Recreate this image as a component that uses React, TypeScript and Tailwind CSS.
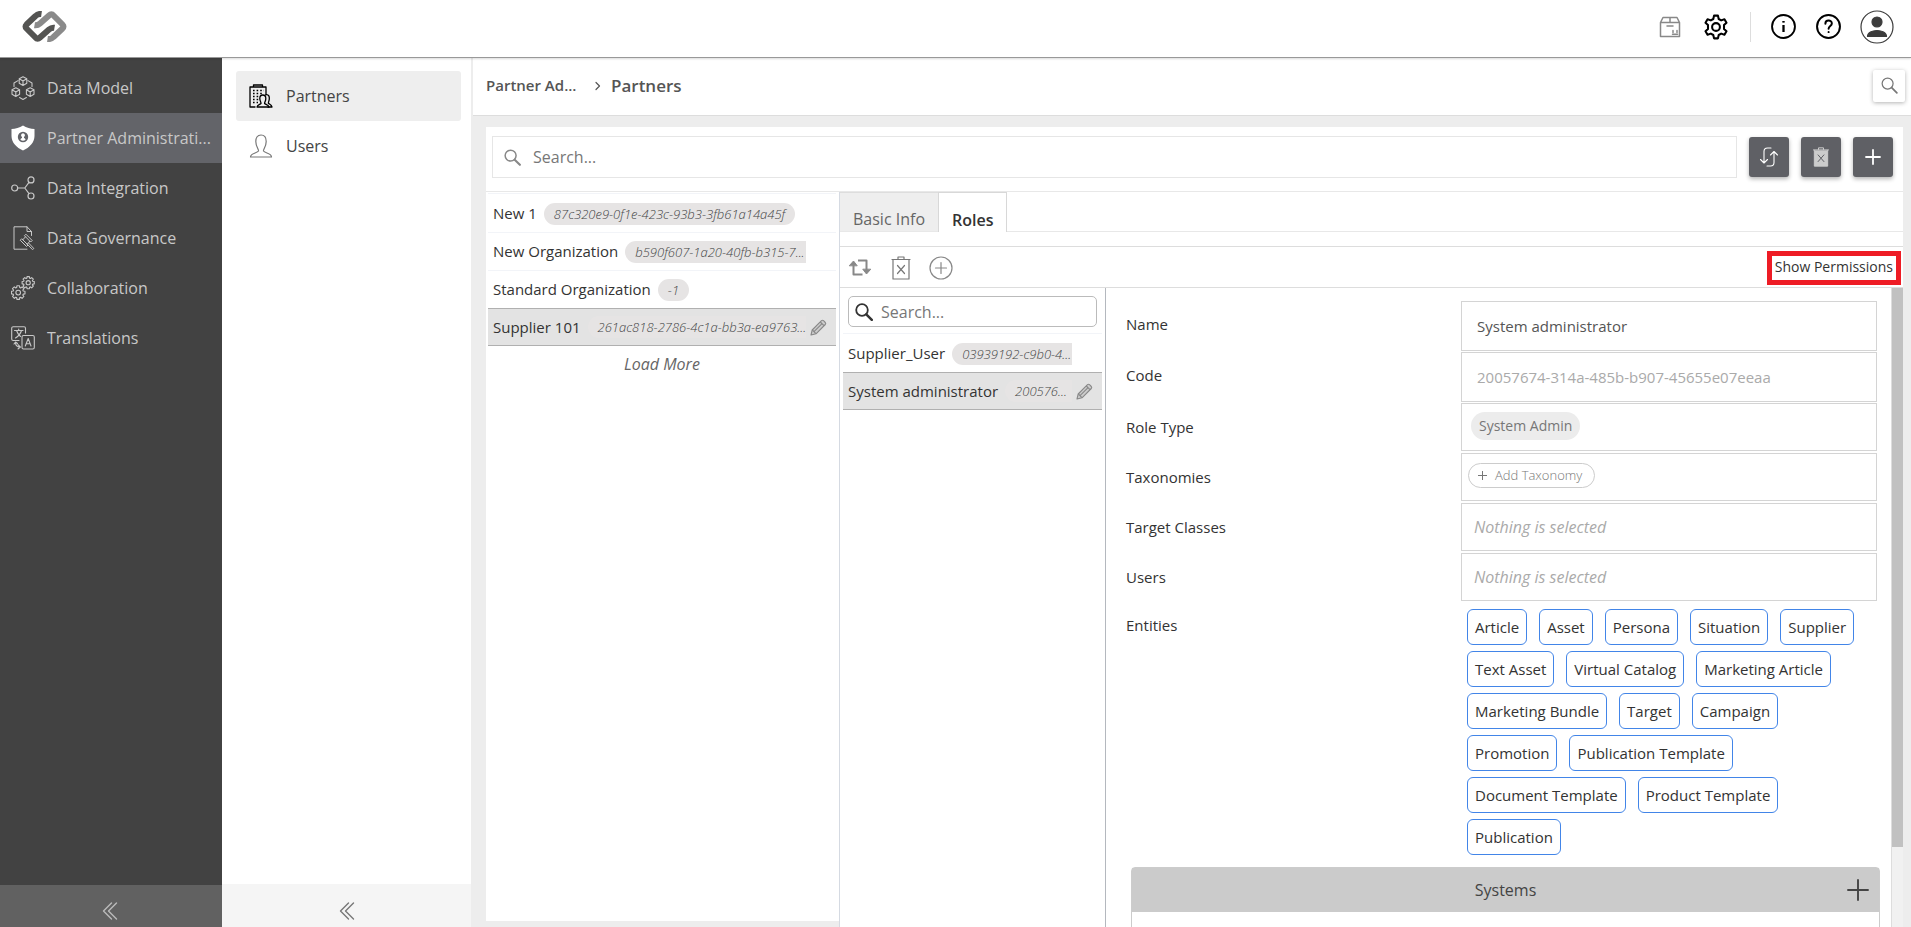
import type { ReactNode } from "react";

function Svg({ s = 24, w = 1, c = "", children, vb = 24 }: { s?: number; w?: number; c?: string; children: ReactNode; vb?: number }) {
  return (
    <svg width={s} height={s} viewBox={`0 0 ${vb} ${vb}`} fill="none" stroke="currentColor" strokeWidth={w} strokeLinecap="round" strokeLinejoin="round" className={`shrink-0 ${c}`} aria-hidden="true">
      {children}
    </svg>
  );
}

const cube = (x: number, y: number) => (
  <path d={`M${x} ${y - 4.2}l3.8 2v4.4l-3.8 2.2l-3.8 -2.2v-4.4zM${x - 3.8} ${y - 2.2}l3.8 2.1l3.8 -2.1M${x} ${y - 0.1}v4.3`} />
);

function Gear({ x, y, r }: { x: number; y: number; r: number }) {
  const pts: string[] = [];
  for (let i = 0; i < 8; i++) {
    const a = (i * Math.PI) / 4;
    const at = (k: number, off: number) => `${(x + Math.cos(a + off) * k).toFixed(2)} ${(y + Math.sin(a + off) * k).toFixed(2)}`;
    pts.push(at(r * 0.76, -0.3), at(r, -0.19), at(r, 0.19), at(r * 0.76, 0.3));
  }
  return (
    <>
      <path d={`M${pts.join("L")}Z`} />
      <circle cx={x} cy={y} r={r * 0.34} />
    </>
  );
}

function DataModelIcon() {
  return (
    <Svg w={1.1}>
      {cube(12, 5)}
      {cube(4.8, 16)}
      {cube(19.2, 16)}
      <path d="M7 4.6L3 7v3.4M17 4.6L21 7v3.4M8.600 21.500L12 23.400l3.400-1.900" />
    </Svg>
  );
}

function ShieldIcon() {
  return (
    <Svg s={26} vb={26}>
      <path d="M13 .5C9.500 2.700 5.500 3.700 1.500 4v7c0 6.500 5 11.500 11.500 14.500C19.500 22.500 24.500 17.500 24.500 11V4C20.500 3.700 16.500 2.700 13 .5z" fill="#fff" stroke="none" />
      <circle cx="13" cy="12" r="5.200" fill="#636469" stroke="none" />
      <path d="M13 8.200a2 2 0 0 1 1 3.700v1.200c.8.300 1.400.800 1.600 1.600a4 4 0 0 1-5.200 0c.2-.8.800-1.300 1.600-1.600v-1.200a2 2 0 0 1 1-3.700z" fill="#fff" stroke="none" />
    </Svg>
  );
}

function IntegrationIcon() {
  return (
    <Svg w={1.2}>
      <circle cx="3.700" cy="12" r="3" />
      <circle cx="20" cy="3.900" r="3" />
      <circle cx="20" cy="20" r="3" />
      <path d="M6.800 12h7M18 6.300L13.800 12L18 17.600" />
    </Svg>
  );
}

function GovernanceIcon() {
  return (
    <Svg>
      <path d="M20.500 9.500V5.500L16 .8H3v22.400h13M16 .8v4.700h4.500" />
      <path d="M15.200 8.500l6 6l-1.500 1.500l-6-6zM11 13l6 6l-1.500 1.500l-6-6zM14.500 10.800L11.800 13.800M18.900 15.200L16.200 18.200M17.800 17.200l5 5.300l-1.300 1.200l-5-5.300" />
    </Svg>
  );
}

function CollabIcon() {
  return (
    <Svg w={1.1}>
      <Gear x={17.2} y={6.7} r={6.2} />
      <Gear x={7.2} y={16.6} r={6.9} />
    </Svg>
  );
}

function TranslateIcon() {
  return (
    <Svg w={1.1}>
      <path d="M8 14.500H2.200a1.500 1.500 0 0 1-1.500-1.500V2.200A1.500 1.500 0 0 1 2.200.7H13a1.500 1.500 0 0 1 1.500 1.500V7" />
      <rect x="11" y="9.500" width="12.300" height="13.500" rx="1.500" />
      <path d="M3.500 4.500h8.500M7.700 3v1.500M10.500 4.500C9.500 8 7 10.500 4.500 12M5.500 4.500C6.500 7.500 8 9.200 9.500 10.500M14.300 20l2.900-7.500L20 20M15.300 17.700h3.700" />
      <path d="M4.500 16.500c0 3 2 4.500 5 4.500M3 18l1.500-2l2 1.500M7 18.700L9.300 21L7 23" />
    </Svg>
  );
}

function PartnersIcon() {
  return (
    <Svg w={1.3}>
      <path d="M6 23H1V3h16v8M4.500 3V1h9v2" />
      <path d="M4 6.500h11M4 9.500h10M4 12.500h7M4 15.500h6M4 18.500h5" strokeDasharray="1.600 2" strokeLinecap="butt" />
      <path d="M17 10.700c3-.4 3.500 2 3.300 4.300c-.2 2-1 3-.9 4.200c1 1 3 1.300 3.600 3.800h-4" fill="#eee" />
      <path d="M8 23c.3-2.300 3-2.500 4-3.500c.4-1-1.200-2-1.200-5c0-2 1-3.500 3-3.500s3 1.500 3 3.500c0 3-1.500 4-1.200 5c1 1 4 1.200 4.400 3.500z" fill="#eee" />
    </Svg>
  );
}

function UserIcon() {
  return (
    <Svg w={1.2}>
      <path d="M1.500 23c0-4 6.500-3.700 8-6c.5-1.500-2.700-4-2.700-9.500C6.800 3.500 8.500 1 12 1s5.200 2.500 5.200 6.500c0 5.500-3.200 8-2.700 9.500c1.500 2.300 8 2 8 6z" />
    </Svg>
  );
}

function SearchIcon({ s = 18, w = 1.6 }: { s?: number; w?: number }) {
  return (
    <Svg s={s} w={w} vb={18}>
      <circle cx="7" cy="7" r="5.800" />
      <path d="M11.300 11.300L16.800 16.800" strokeWidth={w * 1.4} />
    </Svg>
  );
}

function PencilIcon() {
  return (
    <svg width="17" height="17" viewBox="0 0 17 17" className="shrink-0" aria-hidden="true">
      <path d="M1 16l1.200-5L11.500 1.700a1.500 1.500 0 0 1 2 0l1.800 1.800a1.500 1.500 0 0 1 0 2L6 14.800z" fill="#ccc" stroke="#888" strokeWidth="1.100" strokeLinejoin="round" />
      <path d="M4 12.700L12.300 4.400M2.400 11l3.500 3.600M10.300 3l3.700 3.700" stroke="#888" strokeWidth="1.100" />
    </svg>
  );
}

function TrashIcon({ s = 24, solid = false }: { s?: number; solid?: boolean }) {
  return (
    <Svg s={s} w={1.2}>
      <path d="M4 4v19h16V4" fill={solid ? "#ccc" : "none"} />
      <path d="M3 3.500h18M9 3V1h6v2" />
      <path d="M8.500 9.500l7 8M15.500 9.500l-7 8" stroke={solid ? "#5f6065" : "currentColor"} />
    </Svg>
  );
}

function Chevrons() {
  return (
    <Svg s={18} w={1.4} vb={18}>
      <path d="M9.500 1L1.500 9L9.500 17M14.500 1L6.500 9L14.500 17" />
    </Svg>
  );
}

const nav: [string, ReactNode][] = [
  ["Data Model", <DataModelIcon />],
  ["Partner Administrati...", <ShieldIcon />],
  ["Data Integration", <IntegrationIcon />],
  ["Data Governance", <GovernanceIcon />],
  ["Collaboration", <CollabIcon />],
  ["Translations", <TranslateIcon />],
];

const entities = ["Article", "Asset", "Persona", "Situation", "Supplier", "Text Asset", "Virtual Catalog", "Marketing Article", "Marketing Bundle", "Target", "Campaign", "Promotion", "Publication Template", "Document Template", "Product Template", "Publication"];

function ListRow({ name, code, selected = false, fit = false }: { name: string; code: string; selected?: boolean; fit?: boolean }) {
  return (
    <li className={selected ? "-mt-px border-y border-[#b0b0b0] bg-[#e3e3e3]" : "border-b border-[#f2f4f8]"}>
      <button type="button" className={`flex w-full items-center pr-[9px] pl-[5px] text-left ${selected ? "h-9" : "h-[37px]"}`}>
        <span className="shrink-0 text-[15px] text-[#333]">{name}</span>
        <span className={`ml-[7px] h-[22px] bg-[#e6e4e4] pl-2.5 text-[13px] leading-[22px] font-light whitespace-nowrap text-[#444] italic ${fit ? "rounded-full pr-2.5" : "min-w-0 flex-1 rounded-l-full"}`}>{code}</span>
        {!fit && <span className="ml-1 w-[17px] shrink-0">{selected && <PencilIcon />}</span>}
      </button>
    </li>
  );
}

function Field({ label, tall = false, children }: { label: string; tall?: boolean; children: ReactNode }) {
  return (
    <div className={`flex ${tall ? "mb-px h-[50px]" : "mb-0.5 h-12"}`}>
      <label htmlFor={label} className={`flex w-[335px] shrink-0 items-center text-[15px] text-[#333] ${tall ? "pb-1" : ""}`}>{label}</label>
      <div className="flex min-w-0 flex-1 items-center border border-[#d4d4d4]">{children}</div>
    </div>
  );
}

const darkButton = "flex size-10 items-center justify-center rounded-[3px] bg-[#5f6065] text-white shadow-[0_2px_4px_rgba(0,0,0,0.3)]";

export default function App() {
  return (
    <div className="flex h-screen flex-col overflow-hidden bg-white font-['Open_Sans',sans-serif] text-[#333]">
      <header className="z-10 flex h-[58px] shrink-0 items-center justify-between border-b border-[#999] bg-white pr-[17px] pl-[22px] shadow-[0_1px_2px_rgba(0,0,0,0.15)]">
        <a href="#home" aria-label="Home" className="pb-1">
          <svg width="45" height="31" viewBox="0 0 45 31" fill="none" strokeWidth="6" strokeLinejoin="round" aria-hidden="true">
            <path d="M19.500 3Q16 2.500 13.500 5L4.500 13.500Q2.500 15.500 4.500 17.500L13.500 26.500Q15.500 28.800 18 26.500L27 18.500Q29.500 16.300 32.500 16.800" stroke="#545452" />
            <path d="M12.500 14.200Q15.500 14.700 18 12.500L27 4.500Q29.500 2.200 31.500 4.500L40.500 13.500Q42.500 15.500 40.500 17.500L31.500 26Q29 28.500 25.500 28" stroke="#8a8a8a" />
          </svg>
        </a>
        <div className="flex items-center pb-1">
          <button type="button" aria-label="Packages" className="text-[#888]">
            <Svg s={22} w={1.5} vb={22}>
              <path d="M1.500 6.500L4 1.500h14l2.500 5v14h-19zM1.500 6.500h19M11 1.500v5M8 10h6M14 14.500v2M18 14.500v2M13.500 18.300h5" />
            </Svg>
          </button>
          <button type="button" aria-label="Settings" className="ml-[22px] text-black">
            <Svg s={26} w={1.9}>
              <circle cx="12" cy="12" r="3.600" />
              <path d="M10.200 1.500h3.600l.7 3.100l2.300 1.300l3-1l1.900 3.200l-2.300 2.100v3.600l2.300 2.100l-1.900 3.200l-3-1l-2.300 1.300l-.7 3.100h-3.600l-.7-3.100l-2.300-1.300l-3 1l-1.900-3.200l2.300-2.100v-3.600l-2.300-2.100l1.900-3.200l3 1l2.300-1.300z" />
            </Svg>
          </button>
          <span className="mr-5 ml-[21px] h-[30px] w-px bg-[#ddd]" />
          <button type="button" aria-label="Information" className="text-black">
            <Svg s={25} w={1.8}>
              <circle cx="12" cy="12" r="11" />
              <path d="M12 10.500v6.700M12 7v.3" strokeWidth="2.200" strokeLinecap="butt" />
              <path d="M12 6.700v1.600" strokeWidth="2.200" strokeLinecap="butt" />
            </Svg>
          </button>
          <button type="button" aria-label="Help" className="ml-5 text-black">
            <Svg s={25} w={1.9}>
              <circle cx="12" cy="12" r="11" />
              <path d="M9 9.300c0-4 6.200-4 6.200-.2c0 2.300-3.100 2.500-3.100 5M12.100 17.200v.2" />
            </Svg>
          </button>
          <button type="button" aria-label="Account" className="ml-[19px] text-[#3c3c3c]">
            <Svg s={34} w={1.2} vb={34}>
              <circle cx="17" cy="17" r="16" />
              <circle cx="17" cy="12" r="5" fill="currentColor" />
              <path d="M7.500 26.500c0-8 19-8 19 0z" fill="currentColor" />
            </Svg>
          </button>
        </div>
      </header>

      <div className="flex min-h-0 flex-1">
        <nav aria-label="Main" className="flex w-[222px] shrink-0 flex-col bg-[#424242] pt-[5px]">
          {nav.map(([label, icon], i) => (
            <a key={label} href={`#nav-${i}`} className={`flex h-[50px] items-center pl-2.5 text-base whitespace-nowrap text-[#c8c8c8] ${i === 1 ? "bg-[#636469]" : ""}`}>
              <span className="flex w-[26px] shrink-0 justify-center">{icon}</span>
              <span className="ml-[11px]">{label}</span>
            </a>
          ))}
          <button type="button" aria-label="Collapse main menu" className="mt-auto flex h-[42px] items-center justify-center bg-[#616161] pt-2.5 text-[#bbb]"><Chevrons /></button>
        </nav>

        <nav aria-label="Partner Administration" className="flex w-[249px] shrink-0 flex-col pt-[13px]">
          <a href="#partners" className="mr-2.5 ml-3.5 flex h-[50px] items-center rounded-[3px] bg-[#eee] pl-[13px] text-black"><PartnersIcon /><span className="ml-[13px] text-[#444]">Partners</span></a>
          <a href="#users" className="mr-2.5 ml-3.5 flex h-[50px] items-center pl-[13px] text-[#777]"><UserIcon /><span className="ml-[13px] text-[#444]">Users</span></a>
          <button type="button" aria-label="Collapse submenu" className="mt-auto flex h-[43px] items-center justify-center bg-[#f5f5f5] pt-2.5 pl-0.5 text-[#777]"><Chevrons /></button>
        </nav>

        <main className="flex min-w-0 flex-1 flex-col bg-[#ededed]">
          <div className="ml-0.5 flex h-[58px] shrink-0 items-center border-b border-[#ddd] bg-white pr-1.5 pb-0.5 pl-[13px] font-semibold text-[#555]">
            <a href="#administration" className="w-[90px] text-[15px] whitespace-nowrap">Partner Ad...</a>
            <Svg s={10} w={1.2} vb={10} c="ml-[17px]"><path d="M3 1.500L6.500 5L3 8.500" /></Svg>
            <h1 className="ml-2 text-[17px]">Partners</h1>
            <button type="button" aria-label="Find" className="ml-auto flex size-8 items-center justify-center rounded-[2px] text-[#777] shadow-[0_1px_4px_rgba(0,0,0,0.3)]"><SearchIcon s={17} w={1.3} /></button>
          </div>

          <div className="mt-[11px] mr-2 ml-[15px] flex min-h-0 flex-1 flex-col">
            <div className="flex h-[65px] shrink-0 items-start border-b border-[#e8e8e8] bg-white pt-[9px] pr-2.5 pl-1.5">
              <label className="flex h-[42px] flex-1 items-center border border-[#e6e6e6] pl-[11px] text-[#888]">
                <SearchIcon s={17} />
                <input aria-label="Search partners" placeholder="Search..." className="ml-3 w-full text-base outline-none placeholder:text-[#777]" />
              </label>
              <div className="ml-3 flex gap-3 pt-px">
                <button type="button" aria-label="Refresh" className={darkButton}>
                  <Svg s={20} w={1.1} vb={20}><path d="M12 1H8.500Q5 1 5 4.500V16M1.500 12.500L5 16l3.500-3.500M8 19h3.500q3.500 0 3.500-3.500V4.500M11.500 8L15 4.500L18.500 8" /></Svg>
                </button>
                <button type="button" aria-label="Delete" className={darkButton}><span className="text-[#ccc]"><TrashIcon s={20} solid /></span></button>
                <button type="button" aria-label="Add" className={darkButton}><Svg s={16} w={1.8} vb={16}><path d="M8 1v14M1 8h14" /></Svg></button>
              </div>
            </div>

            <div className="flex min-h-0 flex-1">
              <section aria-label="Organizations" className="mb-1.5 w-[353px] shrink-0 bg-white pt-px pr-[3px] pl-0.5">
                <ul className="border-t border-[#f2f4f8] pt-px">
                  <ListRow name="New 1" code="87c320e9-0f1e-423c-93b3-3fb61a14a45f" fit />
                  <ListRow name="New Organization" code="b590f607-1a20-40fb-b315-7..." />
                  <ListRow name="Standard Organization" code="-1" fit />
                  <ListRow name="Supplier 101" code="261ac818-2786-4c1a-bb3a-ea9763..." selected />
                </ul>
                <button type="button" className="flex h-9 w-full items-center justify-center text-base text-[#666] italic">Load More</button>
              </section>

              <section aria-label="Partner details" className="flex min-w-0 flex-1 flex-col border-l border-[#d5dae2] bg-white">
                <div role="tablist" className="flex h-10 shrink-0 border-b border-[#e8e8e8] text-base">
                  <button role="tab" aria-selected="false" type="button" className="h-[39px] border-t border-[#ddd] bg-[#eee] px-[13px] pt-3.5 text-[#666]">Basic Info</button>
                  <button role="tab" aria-selected="true" type="button" className="h-10 border-x border-t border-[#d8d8d8] bg-white px-[13px] pt-3.5 font-semibold">Roles</button>
                </div>
                <div className="mt-3.5 flex h-[42px] shrink-0 items-center border-y border-[#ddd] pt-px pl-2 text-[#888]">
                  <button type="button" aria-label="Refresh roles">
                    <Svg s={24} w={2}><path d="M10 4.500h8.500v10M14.500 18.500h-9V9" strokeLinecap="butt" /><path d="M1.500 9.500L5.500 5l3.500 4.500zM15 13.500L18.500 18l4-4.500z" fill="currentColor" strokeWidth="1" /></Svg>
                  </button>
                  <button type="button" aria-label="Delete role" className="ml-[17px] text-[#777]"><TrashIcon /></button>
                  <button type="button" aria-label="Add role" className="ml-4"><Svg w={1.2}><circle cx="12" cy="12" r="11" /><path d="M12 6.500v11M6.500 12h11" /></Svg></button>
                  <button type="button" className="mr-0.5 ml-auto h-[34px] border-[5px] border-[#ee1c25] px-[3px] pb-px text-sm leading-[22px] text-[#333]">Show Permissions</button>
                </div>

                <div className="flex min-h-0 flex-1">
                  <div className="w-[266px] shrink-0 border-r border-[#b4b8be] px-[3px] pt-2">
                    <label className="mr-[5px] ml-[5px] flex h-[31px] items-center rounded-[5px] border border-[#bbb] pl-1.5">
                      <SearchIcon w={1.8} />
                      <input aria-label="Search roles" placeholder="Search..." className="ml-2 w-full min-w-0 text-base outline-none placeholder:text-[#777]" />
                    </label>
                    <ul className="mt-1.5 border-t border-[#f2f4f8] pt-px">
                      <ListRow name="Supplier_User" code="03939192-c9b0-4..." />
                      <ListRow name="System administrator" code="200576..." selected />
                    </ul>
                  </div>

                  <div className="min-w-0 flex-1 overflow-hidden pt-[13px] pr-[11px] pl-5">
                    <div className="pr-[3px]">
                      <Field label="Name" tall><input id="Name" defaultValue="System administrator" className="w-full px-[15px] text-[15px] text-[#555] outline-none" /></Field>
                      <Field label="Code" tall><input id="Code" readOnly defaultValue="20057674-314a-485b-b907-45655e07eeaa" className="w-full px-[15px] text-[15px] text-[#aaa] outline-none" /></Field>
                      <Field label="Role Type"><button id="Role Type" type="button" className="mb-0.5 ml-[9px] h-7 rounded-full bg-[#ececec] px-2 text-sm text-[#777]">System Admin</button></Field>
                      <Field label="Taxonomies"><button id="Taxonomies" type="button" className="mb-[3px] ml-1.5 flex h-[25px] items-center gap-2 rounded-full border border-[#ccc] pr-3 pl-[9px] text-[13px] font-light text-[#777]"><Svg s={9} vb={9}><path d="M4.500 0v9M0 4.500h9" /></Svg>Add Taxonomy</button></Field>
                      <Field label="Target Classes"><input id="Target Classes" placeholder="Nothing is selected" className="w-full px-3 text-base italic outline-none placeholder:text-[#aaa]" /></Field>
                      <Field label="Users"><input id="Users" placeholder="Nothing is selected" className="w-full px-3 text-base italic outline-none placeholder:text-[#aaa]" /></Field>
                      <div className="flex pt-1.5">
                        <h2 className="w-[335px] shrink-0 text-[15px] leading-8">Entities</h2>
                        <ul className="flex min-w-0 flex-1 flex-wrap gap-x-3 gap-y-1.5 pl-1.5">
                          {entities.map((e) => <li key={e} className="h-9 rounded-md border border-[#4285e8] px-[7px] text-[15px] leading-[34px]">{e}</li>)}
                        </ul>
                      </div>
                    </div>
                    <section aria-label="Systems" className="mt-3 ml-[5px] h-40 rounded-t border border-[#ccc]">
                      <div className="flex h-11 items-center bg-[#cbcbcb] pr-2.5 text-[#444]">
                        <h2 className="flex-1 pl-8 text-center text-base">Systems</h2>
                        <button type="button" aria-label="Add system"><Svg s={22} w={1.9} vb={22}><path d="M11 1v20M1 11h20" /></Svg></button>
                      </div>
                    </section>
                  </div>
                  <div className="w-3 shrink-0 border-l border-[#ddd] bg-[#f1f1f1]"><div className="h-[87.5%] bg-[#c1c1c1]" /></div>
                </div>
              </section>
            </div>
          </div>
        </main>
      </div>
    </div>
  );
}
